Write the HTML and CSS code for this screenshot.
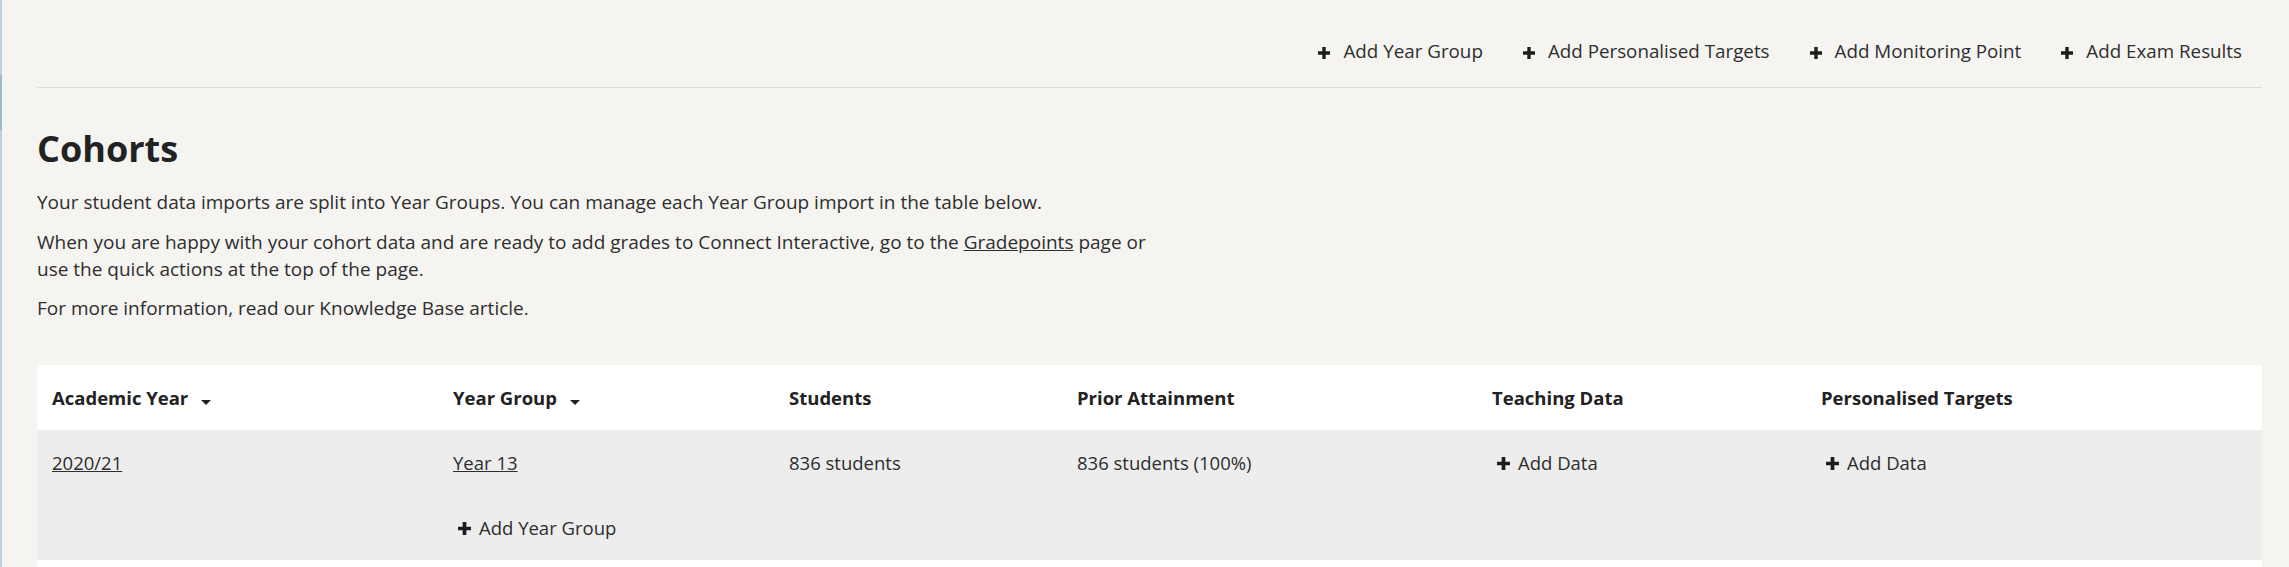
FILE: index.html
```html
<!DOCTYPE html>
<html lang="en">
<head>
    <meta charset="UTF-8">
    <meta name="viewport" content="width=device-width, initial-scale=1.0">
    <title>Cohorts</title>
    <link rel="stylesheet" href="styles.css">
</head>
<body>
    <div class="page">
        <div class="rail"></div>
        <main class="main">
            <nav class="quick-actions">
                <a class="action" href="#"><svg class="plus" viewBox="0 0 12 12"><path d="M4.3 0h3.4v4.3H12v3.4H7.7V12H4.3V7.7H0V4.3h4.3z"/></svg>Add Year Group</a>
                <a class="action" href="#"><svg class="plus" viewBox="0 0 12 12"><path d="M4.3 0h3.4v4.3H12v3.4H7.7V12H4.3V7.7H0V4.3h4.3z"/></svg>Add Personalised Targets</a>
                <a class="action" href="#"><svg class="plus" viewBox="0 0 12 12"><path d="M4.3 0h3.4v4.3H12v3.4H7.7V12H4.3V7.7H0V4.3h4.3z"/></svg>Add Monitoring Point</a>
                <a class="action" href="#"><svg class="plus" viewBox="0 0 12 12"><path d="M4.3 0h3.4v4.3H12v3.4H7.7V12H4.3V7.7H0V4.3h4.3z"/></svg>Add Exam Results</a>
            </nav>

            <section class="intro">
                <h1>Cohorts</h1>
                <p>Your student data imports are split into Year Groups. You can manage each Year Group import in the table below.</p>
                <p>When you are happy with your cohort data and are ready to add grades to Connect Interactive, go to the <a href="#">Gradepoints</a> page or use the quick actions at the top of the page.</p>
                <p>For more information, read our Knowledge Base article.</p>
            </section>

            <table class="cohorts">
                <colgroup>
                    <col class="c-year">
                    <col class="c-group">
                    <col class="c-students">
                    <col class="c-prior">
                    <col class="c-teaching">
                    <col class="c-targets">
                </colgroup>
                <thead>
                    <tr>
                        <th>Academic Year <span class="sort"></span></th>
                        <th>Year Group <span class="sort"></span></th>
                        <th>Students</th>
                        <th>Prior Attainment</th>
                        <th>Teaching Data</th>
                        <th>Personalised Targets</th>
                    </tr>
                </thead>
                <tbody>
                    <tr class="year-row">
                        <td><a href="#">2020/21</a></td>
                        <td>
                            <a href="#">Year 13</a>
                            <div class="add-group"><a class="add" href="#"><svg class="plus" viewBox="0 0 12 12"><path d="M4.3 0h3.4v4.3H12v3.4H7.7V12H4.3V7.7H0V4.3h4.3z"/></svg>Add Year Group</a></div>
                        </td>
                        <td>836 students</td>
                        <td>836 students (100%)</td>
                        <td><a class="add" href="#"><svg class="plus" viewBox="0 0 12 12"><path d="M4.3 0h3.4v4.3H12v3.4H7.7V12H4.3V7.7H0V4.3h4.3z"/></svg>Add Data</a></td>
                        <td><a class="add" href="#"><svg class="plus" viewBox="0 0 12 12"><path d="M4.3 0h3.4v4.3H12v3.4H7.7V12H4.3V7.7H0V4.3h4.3z"/></svg>Add Data</a></td>
                    </tr>
                    <tr class="blank-row">
                        <td colspan="6"></td>
                    </tr>
                </tbody>
            </table>
        </main>
    </div>
</body>
</html>
```

FILE: styles.css
```css
:root {
    --page-bg: #f5f4f1;
    --text-color: #2e2e2e;
    --heading-color: #222;
    --divider: #dcdcdc;
    --row-bg: #ededed;
    --rail-light: #bdd0e1;
    --rail-dark: #9bb8d2;
}

* {
    margin: 0;
    padding: 0;
    box-sizing: border-box;
}

body {
    font-family: 'Open Sans', 'Noto Sans', sans-serif;
    font-size: 19px;
    line-height: 27px;
    color: var(--text-color);
    background-color: var(--page-bg);
}

a {
    color: var(--text-color);
}

.page {
    display: flex;
    min-height: 100vh;
}

.rail {
    width: 2px;
    flex-shrink: 0;
    background: linear-gradient(to bottom, var(--rail-light) 0 75px, var(--rail-dark) 75px 130px, var(--rail-light) 130px);
}

.main {
    flex: 1;
    padding: 0 27px 0 35px;
}

/* top quick actions */
.quick-actions {
    display: flex;
    justify-content: flex-end;
    padding: 39px 0 23px;
    font-size: 18.8px;
    line-height: 25px;
    border-bottom: 1px solid var(--divider);
}

.action {
    padding: 0 20px;
    text-decoration: none;
    white-space: nowrap;
}

.plus {
    width: 12px;
    height: 12px;
    fill: #1e1e1e;
    vertical-align: -1px;
}

.action .plus {
    margin-right: 13px;
}

/* intro text */
.intro {
    max-width: 1110px;
    margin-top: 39px;
}

.intro h1 {
    font-size: 36px;
    line-height: 44px;
    font-weight: 700;
    color: var(--heading-color);
    margin-bottom: 18px;
}

.intro p {
    margin-bottom: 12.5px;
}

.intro p:last-child {
    margin-bottom: 0;
}

/* cohorts table */
.cohorts {
    width: 100%;
    margin-top: 43px;
    border-collapse: collapse;
    table-layout: fixed;
    font-size: 18.5px;
    line-height: 25px;
}

.c-year { width: 401px; }
.c-group { width: 336px; }
.c-students { width: 288px; }
.c-prior { width: 415px; }
.c-teaching { width: 329px; }

.cohorts th {
    height: 65px;
    padding: 0 15px;
    text-align: left;
    font-weight: 700;
    color: var(--heading-color);
    background: #fff;
    vertical-align: middle;
}

.sort {
    display: inline-block;
    width: 0;
    height: 0;
    margin-left: 8px;
    border-left: 5px solid transparent;
    border-right: 5px solid transparent;
    border-top: 5px solid #222;
    vertical-align: 0;
}

.cohorts td {
    padding: 20px 15px;
    vertical-align: top;
}

.year-row td {
    background: var(--row-bg);
}

.add-group {
    margin-top: 40px;
}

.add {
    margin-left: 5px;
    text-decoration: none;
    white-space: nowrap;
}

.add .plus {
    width: 13px;
    height: 13px;
    margin-right: 8px;
    vertical-align: 0;
}

.blank-row td {
    height: 65px;
    background: #fff;
}
```
